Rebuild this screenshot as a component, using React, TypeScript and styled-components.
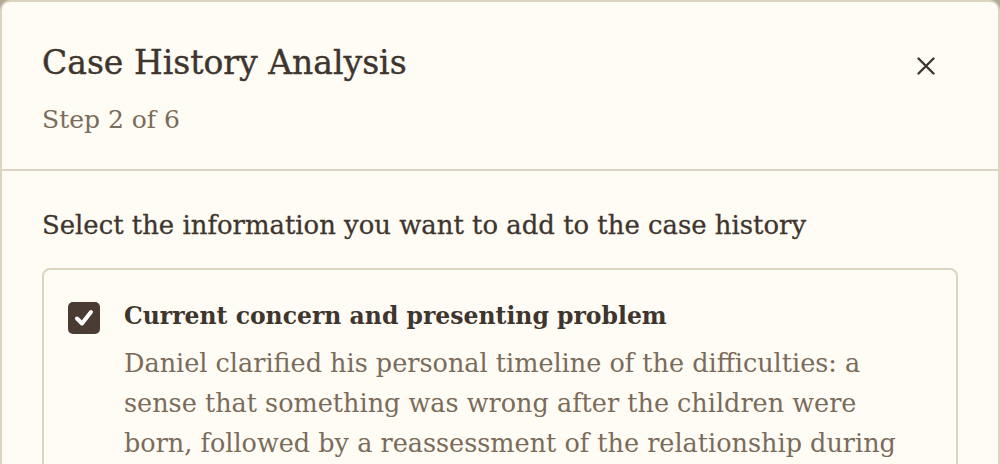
import React from "react";
import styled, { createGlobalStyle } from "styled-components";

const GlobalStyle = createGlobalStyle`
  html, body {
    margin: 0;
    padding: 0;
    background: #b3a998;
  }
  body {
    font-family: "DejaVu Serif", "Liberation Serif", serif;
    -webkit-font-smoothing: antialiased;
  }
  * { box-sizing: border-box; }
`;

const Modal = styled.div`
  width: 1000px;
  background: #fffcf5;
  border: 2px solid #ddd3c1;
  border-bottom: none;
  border-radius: 10px 10px 0 0;
  color: #3e352e;
`;

const Header = styled.header`
  display: flex;
  justify-content: space-between;
  align-items: flex-start;
  padding: 39px 40px 31px;
  border-bottom: 2px solid #ddd3c1;
`;

const TitleBlock = styled.div`
  display: flex;
  flex-direction: column;
  gap: 17px;
`;

const Title = styled.h2`
  margin: 0;
  font-size: 33px;
  line-height: 44px;
  font-weight: 400;
  color: #3e352e;
  -webkit-text-stroke: 0.4px currentColor;
`;

const Step = styled.div`
  font-size: 25px;
  line-height: 36px;
  color: #7b6b5a;
`;

const CloseButton = styled.button`
  width: 44px;
  height: 44px;
  margin: 3px 10px 0 0;
  padding: 0;
  border: none;
  background: transparent;
  color: #3e352e;
  display: flex;
  align-items: center;
  justify-content: center;
  cursor: pointer;
`;

const Body = styled.div`
  padding: 36px 40px 40px;
`;

const Prompt = styled.p`
  margin: 0;
  font-size: 25.9px;
  line-height: 36px;
  color: #3e352e;
  -webkit-text-stroke: 0.3px currentColor;
`;

const Card = styled.label`
  margin-top: 25px;
  display: flex;
  align-items: flex-start;
  gap: 24px;
  padding: 32px 24px;
  border: 2px solid #ddd3c1;
  border-radius: 8px;
  cursor: pointer;
`;

const Box = styled.span<{ $checked: boolean }>`
  flex: 0 0 32px;
  width: 32px;
  height: 32px;
  border-radius: 5px;
  background: ${(p) => (p.$checked ? "#4a3c32" : "transparent")};
  border: ${(p) => (p.$checked ? "none" : "2px solid #4a3c32")};
  display: flex;
  align-items: center;
  justify-content: center;
`;

const Texts = styled.div`
  display: flex;
  flex-direction: column;
  gap: 13px;
`;

const Label = styled.span`
  font-size: 23.5px;
  line-height: 28px;
  font-weight: 700;
  color: #3e352e;
`;

const Description = styled.span`
  font-size: 25.5px;
  line-height: 40px;
  color: #7b6b5a;
`;

export default function App() {
  return (
    <>
      <GlobalStyle />
      <Modal>
        <Header>
          <TitleBlock>
            <Title>Case History Analysis</Title>
            <Step>Step 2 of 6</Step>
          </TitleBlock>
          <CloseButton aria-label="Close">
            <svg width="18" height="18" viewBox="0 0 18 18" fill="none">
              <path d="M1.5 1.5 L16.5 16.5 M16.5 1.5 L1.5 16.5" stroke="currentColor" strokeWidth="2.4" strokeLinecap="round" />
            </svg>
          </CloseButton>
        </Header>
        <Body>
          <Prompt>Select the information you want to add to the case history</Prompt>
          <Card>
            <Box $checked>
              <svg width="22" height="22" viewBox="0 0 22 22" fill="none">
                <path d="M4 11.5 L9 16.5 L18 5" stroke="#ffffff" strokeWidth="4" strokeLinecap="round" strokeLinejoin="round" />
              </svg>
            </Box>
            <Texts>
              <Label>Current concern and presenting problem</Label>
              <Description>
                Daniel clarified his personal timeline of the difficulties: a sense that something was wrong after the children were born, followed by a reassessment of the relationship during
              </Description>
            </Texts>
          </Card>
        </Body>
      </Modal>
    </>
  );
}
